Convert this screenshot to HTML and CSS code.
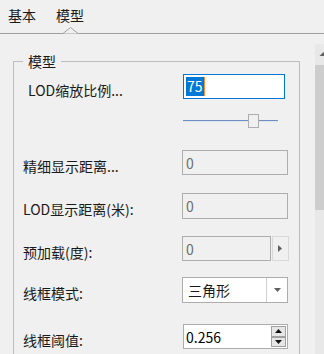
FILE: index.html
```html
<!DOCTYPE html>
<html lang="zh-CN">
<head>
  <meta charset="UTF-8" />
  <title>模型属性</title>
  <link rel="stylesheet" href="styles.css">
</head>
<body>
  <!-- 选项卡 -->
  <div class="tabs">
    <span class="tab">基本</span>
    <span class="tab active">模型
      <svg class="notch" width="15" height="7" viewBox="0 0 15 7">
        <polygon points="0,6.5 7.5,0.5 15,6.5" fill="#f0f0f0" />
        <polyline points="0,6.5 7.5,0.5 15,6.5" fill="none" stroke="#a0a0a0" stroke-width="1" />
      </svg>
    </span>
  </div>

  <div class="page">
    <div class="panel">
      <fieldset class="group">
        <legend>模型</legend>

        <div class="row row-scale">
          <label class="lbl lbl-indent">LOD缩放比例...</label>
          <div class="edit edit-focus"><span class="sel">75</span><span class="caret"></span></div>
        </div>

        <div class="row row-slider">
          <span></span>
          <div class="slider">
            <div class="thumb" style="margin-left:65px"></div>
          </div>
        </div>

        <div class="row row-detail">
          <label class="lbl">精细显示距离...</label>
          <div class="edit edit-off">0</div>
        </div>

        <div class="row row-lod">
          <label class="lbl">LOD显示距离(米):</label>
          <div class="edit edit-off">0</div>
        </div>

        <div class="row row-preload">
          <label class="lbl">预加载(度):</label>
          <div class="pick">
            <div class="edit edit-off edit-short">0</div>
            <div class="pick-btn">
              <svg width="5" height="7" viewBox="0 0 5 7"><polygon points="0,0 4,3.5 0,7" fill="#606060" /></svg>
            </div>
          </div>
        </div>

        <div class="row row-mode">
          <label class="lbl">线框模式:</label>
          <div class="combo">
            <span class="combo-text">三角形</span>
            <span class="combo-btn">
              <svg width="7" height="4" viewBox="0 0 7 4"><polygon points="0,0 7,0 3.5,4" fill="#606060" /></svg>
            </span>
          </div>
        </div>

        <div class="row row-thresh">
          <label class="lbl">线框阈值:</label>
          <div class="spin">
            <span class="spin-text">0.256</span>
            <span class="spin-btns">
              <span class="spin-btn">
                <svg width="7" height="4" viewBox="0 0 7 4"><polygon points="0,4 7,4 3.5,0" fill="#111" /></svg>
              </span>
              <span class="spin-btn">
                <svg width="7" height="4" viewBox="0 0 7 4"><polygon points="0,0 7,0 3.5,4" fill="#111" /></svg>
              </span>
            </span>
          </div>
        </div>
      </fieldset>
    </div>

    <!-- 滚动条（右侧被裁掉一半） -->
    <div class="scrollbar">
      <div class="sb-up">
        <svg width="9" height="21" viewBox="0 0 9 21"><polygon points="8.5,8 12.5,12 4.5,12" fill="#606060" /></svg>
      </div>
      <div class="sb-thumb"></div>
      <div class="sb-track"></div>
    </div>
  </div>
</body>
</html>
```

FILE: styles.css
```css
html, body {
  margin: 0;
  height: 100%;
}
body {
  font-family: "Noto Sans CJK SC", "Noto Sans", sans-serif;
  font-size: 14px;
  color: #1a1a1a;
  background-color: #f0f0f0;
  display: flex;
  flex-direction: column;
  overflow: hidden;
}

/* 选项卡 */
.tabs {
  height: 33px;
  flex: none;
  display: flex;
  align-items: center;
  gap: 20px;
  padding-left: 8px;
  border-bottom: 1px solid #a0a0a0;
  line-height: 16px;
}
.tab {
  position: relative;
  height: 33px;
  display: flex;
  align-items: center;
  padding-bottom: 4px;
  box-sizing: border-box;
}
.notch {
  position: absolute;
  left: 7px;
  bottom: -1px;
  display: block;
}

.page {
  flex: 1;
  display: flex;
  min-height: 0;
}
.panel {
  flex: 1;
  padding: 0 15px 0 13px;
}

/* 分组框 */
.group {
  margin: 19px 0 0 0;
  padding: 0 0 10px 9px;
  border: 1px solid #bdbdbd;
  min-width: 0;
}
.group legend {
  margin-left: 0;
  padding: 0 5px;
  line-height: 16px;
}

.row {
  display: grid;
  grid-template-columns: 159px auto;
  align-items: center;
  justify-items: start;
}
.lbl {
  padding-top: 6px;
  line-height: 16px;
  white-space: nowrap;
}
.lbl-indent {
  padding-left: 5px;
}

.row-scale { margin-top: 5px; height: 25px; }
.row-slider { margin-top: 15px; height: 14px; }
.row-detail { margin-top: 22px; height: 25px; }
.row-lod { margin-top: 18px; height: 26px; }
.row-preload { margin-top: 17px; height: 25px; }
.row-mode { margin-top: 16px; height: 26px; }
.row-thresh { margin-top: 21px; height: 25px; }

/* 文本框 */
.edit {
  box-sizing: border-box;
  width: 106px;
  height: 100%;
  border: 1px solid #adadad;
  background: #fff;
  display: flex;
  align-items: center;
  padding-left: 3px;
  line-height: 16px;
}
.edit-focus {
  width: 102px;
  margin-left: 1px;
  border-color: #0078d7;
  padding-left: 2px;
}
.sel {
  background: #0078d7;
  color: #fff;
  height: 19px;
  line-height: 19px;
  padding: 0 1px;
}
.caret {
  width: 1px;
  height: 19px;
  background: #ff8c28;
}
.edit-off {
  background: #f0f0f0;
  color: #6d6d6d;
}
.edit-short {
  width: 89px;
}

/* 滑块 */
.slider {
  width: 95px;
  height: 14px;
  margin-left: 1px;
  display: flex;
  background: linear-gradient(#6f8fc0, #6f8fc0) 0 6px / 100% 1px no-repeat,
              linear-gradient(#dde6f0, #dde6f0) 0 7px / 100% 1px no-repeat;
}
.thumb {
  box-sizing: border-box;
  width: 11px;
  height: 14px;
  border: 1px solid #adadad;
  background: #f0f0f0;
}

/* 带按钮的输入 */
.pick {
  display: flex;
  height: 100%;
}
.pick-btn {
  box-sizing: border-box;
  width: 17px;
  height: 100%;
  margin-left: 1px;
  border: 1px solid #d9d9d9;
  display: flex;
  align-items: center;
  justify-content: center;
}

/* 下拉框 */
.combo {
  box-sizing: border-box;
  width: 106px;
  height: 100%;
  border: 1px solid #adadad;
  background: #fff;
  display: flex;
  align-items: center;
}
.combo-text {
  flex: 1;
  padding-left: 5px;
  line-height: 16px;
}
.combo-btn {
  width: 20px;
  height: 100%;
  border-left: 1px solid #d0d0d0;
  display: flex;
  align-items: center;
  justify-content: center;
}

/* 数字框 */
.spin {
  box-sizing: border-box;
  width: 105px;
  height: 100%;
  margin-left: 1px;
  border: 1px solid #adadad;
  background: #fff;
  display: flex;
  align-items: center;
  padding: 0 1px 0 2px;
}
.spin-text {
  flex: 1;
  color: #000;
  line-height: 16px;
}
.spin-btns {
  display: flex;
  flex-direction: column;
  width: 15px;
  height: 21px;
}
.spin-btn {
  flex: 1;
  box-sizing: border-box;
  border: 1px solid #a0a0a0;
  background: #e6e6e6;
  display: flex;
  align-items: center;
  justify-content: center;
}

/* 滚动条 */
.scrollbar {
  width: 9px;
  margin-top: 10px;
  display: flex;
  flex-direction: column;
  overflow: hidden;
}
.sb-up {
  height: 21px;
  background: #e8e8e8;
}
.sb-up svg {
  display: block;
}
.sb-thumb {
  height: 145px;
  background: #cdcdcd;
}
.sb-track {
  flex: 1;
  background: #e8e8e8;
}
```
